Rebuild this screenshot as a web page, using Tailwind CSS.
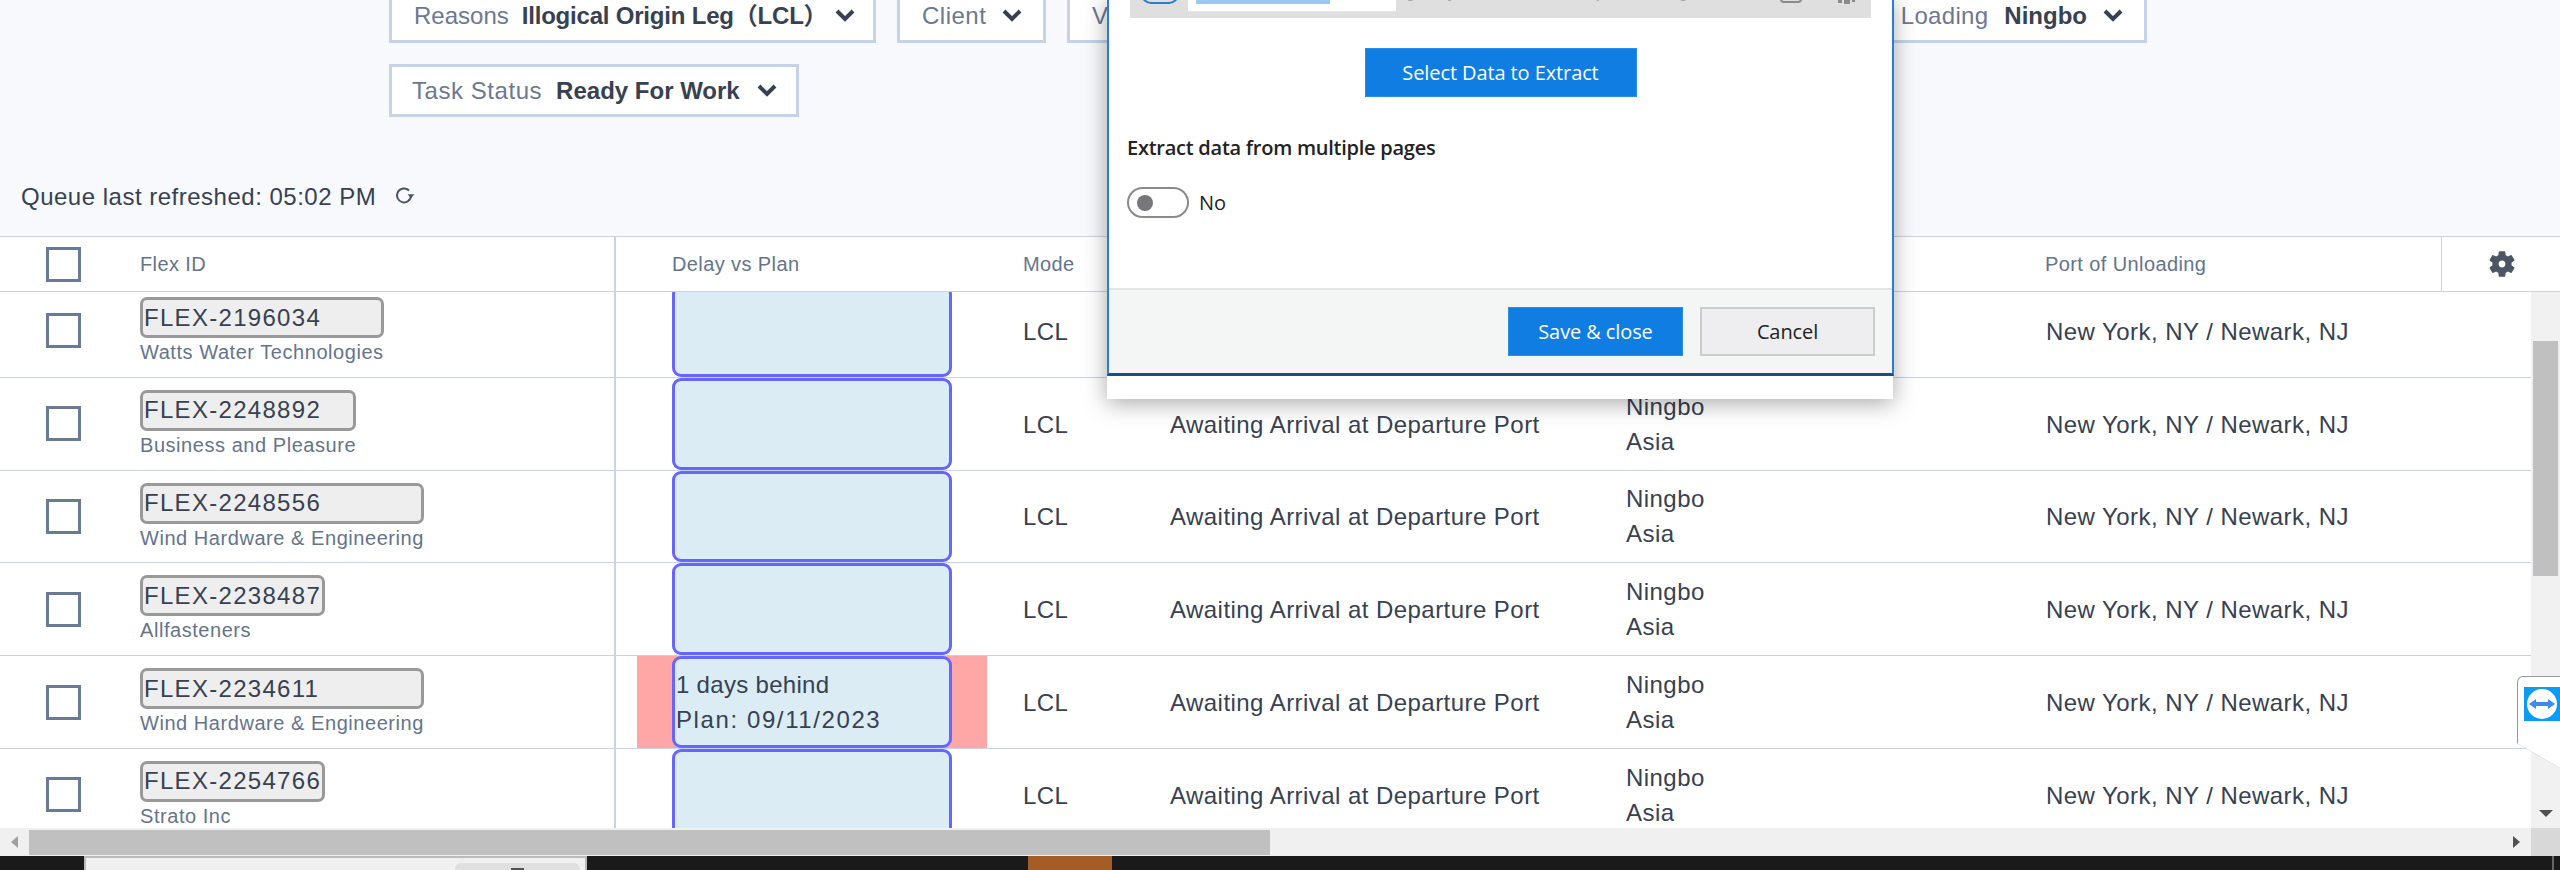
<!DOCTYPE html>
<html lang="en">
<head>
    <meta charset="UTF-8">
    <title>Queue</title>
    <script src="https://cdn.jsdelivr.net/npm/@tailwindcss/browser@4"></script>
</head>
<body class="m-0 bg-[#f7f9fd]">
<div class="relative w-[2560px] h-[870px] overflow-hidden flex flex-col font-['Liberation_Sans','Noto_Sans_CJK_SC',sans-serif] text-[#374151]">

    <!-- FILTERS -->
    <div class="h-[236px] shrink-0 pl-[389px] flex flex-col">
        <div class="flex gap-[21px] h-[54px] -mt-[11px] shrink-0">
            <button class="flex items-center w-[487px] pl-[22px] bg-white border-[3px] border-[#c5d2e8] text-[24px]">
                <span class="text-[#6b7890] mr-[13px]">Reasons</span>
                <b class="font-bold tracking-[-0.2px]">Illogical Origin Leg（LCL）</b>
                <svg class="ml-[8px]" width="20" height="14" viewBox="0 0 20 14" fill="none" stroke="#374151" stroke-width="4"><path d="M2 2l8 8 8-8"/></svg>
            </button>
            <button class="flex items-center w-[149px] pl-[22px] bg-white border-[3px] border-[#c5d2e8] text-[24px]">
                <span class="text-[#6b7890] tracking-[0.5px]">Client</span>
                <svg class="ml-[16px]" width="20" height="14" viewBox="0 0 20 14" fill="none" stroke="#374151" stroke-width="4"><path d="M2 2l8 8 8-8"/></svg>
            </button>
            <button class="flex items-center w-[180px] pl-[22px] bg-white border-[3px] border-[#c5d2e8] text-[24px]">
                <span class="text-[#6b7890]">Vendor</span>
            </button>
            <button class="flex items-center justify-end w-[659px] ml-[220px] pr-[21px] bg-white border-[3px] border-[#c5d2e8] text-[24px]">
                <span class="text-[#6b7890] mr-[16px] tracking-[0.3px]">Port of Loading</span>
                <b class="font-bold">Ningbo</b>
                <svg class="ml-[16px]" width="20" height="14" viewBox="0 0 20 14" fill="none" stroke="#374151" stroke-width="4"><path d="M2 2l8 8 8-8"/></svg>
            </button>
        </div>
        <div class="flex mt-[21px] shrink-0">
            <button class="flex items-center w-[410px] h-[53px] pl-[20px] bg-white border-[3px] border-[#c5d2e8] text-[24px]">
                <span class="text-[#6b7890] mr-[14px] tracking-[0.55px]">Task Status</span>
                <b class="font-bold">Ready For Work</b>
                <svg class="ml-[17px]" width="20" height="14" viewBox="0 0 20 14" fill="none" stroke="#374151" stroke-width="4"><path d="M2 2l8 8 8-8"/></svg>
            </button>
        </div>
        <div class="flex items-center -ml-[368px] mt-[62px] text-[24px] text-[#374151] tracking-[0.5px]">
            <span>Queue last refreshed: 05:02 PM</span>
            <svg class="ml-[18px] -mt-[2px]" width="22" height="22" viewBox="0 0 22 22" fill="none" stroke="#4b5563" stroke-width="2"><path d="M15 5.5a7 7 0 1 0 2 5"/><path d="M13.6 9.2h6.8l-3.4 4z" fill="#4b5563" stroke="none"/></svg>
        </div>
    </div>

    <!-- TABLE HEAD -->
    <div class="flex items-center h-[56px] shrink-0 bg-white border-y border-[#c8d3e8] text-[20px] text-[#64748b] tracking-[0.4px]">
        <div class="w-[140px] pl-[46px]"><span class="block w-[35px] h-[35px] border-[3px] border-[#6b7a94]"></span></div>
        <div class="w-[474px] h-full flex items-center">Flex ID</div>
        <div class="w-[2px] h-full bg-[#c8d3e8]"></div>
        <div class="w-[407px] pl-[56px]">Delay vs Plan</div>
        <div class="w-[147px]">Mode</div>
        <div class="w-[456px]">Status</div>
        <div class="w-[419px]">Port of Loading</div>
        <div class="w-[396px]">Port of Unloading</div>
        <div class="w-[119px] h-full flex items-center border-l border-[#c8d3e8] pl-[44px]">
            <svg width="32" height="32" viewBox="0 0 24 24" fill="#4b5563"><path d="M19.14 12.94c.04-.3.06-.61.06-.94 0-.32-.02-.64-.07-.94l2.03-1.58a.49.49 0 0 0 .12-.61l-1.92-3.32a.488.488 0 0 0-.59-.22l-2.39.96c-.5-.38-1.03-.7-1.62-.94l-.36-2.54a.484.484 0 0 0-.48-.41h-3.84c-.24 0-.43.17-.47.41l-.36 2.54c-.59.24-1.13.57-1.62.94l-2.39-.96c-.22-.08-.47 0-.59.22L2.74 8.87c-.12.21-.08.47.12.61l2.03 1.58c-.05.3-.09.63-.09.94s.02.64.07.94l-2.03 1.58a.49.49 0 0 0-.12.61l1.92 3.32c.12.22.37.29.59.22l2.39-.96c.5.38 1.03.7 1.62.94l.36 2.54c.05.24.24.41.48.41h3.84c.24 0 .44-.17.47-.41l.36-2.54c.59-.24 1.13-.56 1.62-.94l2.39.96c.22.08.47 0 .59-.22l1.92-3.32c.12-.22.07-.47-.12-.61l-2.01-1.58zM12 14.6c-1.43 0-2.6-1.17-2.6-2.6s1.17-2.6 2.6-2.6 2.6 1.17 2.6 2.6-1.17 2.6-2.6 2.6z"/></svg>
        </div>
    </div>

    <!-- TABLE BODY + SCROLLBARS -->
    <div class="flex h-[536px] shrink-0">
        <div class="w-[2531px] bg-white overflow-hidden">
            <div id="rows" class="-mt-[7px]"></div>
        </div>
        <div class="relative w-[29px] bg-[#f1f1f1]">
            <div class="absolute left-[2px] top-[49px] w-[25px] h-[235px] bg-[#c0c0c0]"></div>
            <div class="absolute left-[8px] top-[518px] w-0 h-0 border-x-[7px] border-x-transparent border-t-[7px] border-t-[#505050]"></div>
        </div>
    </div>
    <div class="flex h-[28px] shrink-0 bg-[#f0f0f0]">
        <div class="flex items-center w-[29px] pl-[11px]"><span class="w-0 h-0 border-y-[6px] border-y-transparent border-r-[7px] border-r-[#a0a0a0]"></span></div>
        <div class="w-[1241px] h-[25px] mt-[2px] bg-[#c0c0c0]"></div>
        <div class="flex items-center justify-end w-[1261px] pr-[11px]"><span class="w-0 h-0 border-y-[6px] border-y-transparent border-l-[7px] border-l-[#505050]"></span></div>
        <div class="w-[29px] bg-[#d8d8d8]"></div>
    </div>

    <!-- TASKBAR -->
    <div class="relative flex-1 bg-[#1a1a1a] overflow-hidden">
        <div class="absolute left-[84px] top-0 w-[503px] h-[14px] bg-[#f0f0f0] border-x-2 border-t-2 border-[#bbbbbb]">
            <div class="absolute left-[369px] top-[5px] w-[125px] h-[20px] rounded-[6px] bg-[#e0e0e0]"></div>
            <div class="absolute left-[425px] top-[10px] w-[13px] h-[4px] bg-[#555555]"></div>
        </div>
        <div class="absolute left-[1028px] top-0 w-[84px] h-[14px] bg-[#a65c26]"></div>
        <div class="absolute left-[2373px] top-[11px] text-[22px] leading-[26px] text-white font-semibold">5:14 PM</div>
        <div class="absolute left-[2552px] top-0 w-[2px] h-[14px] bg-[#666666]"></div>
    </div>

    <!-- TEAMVIEWER TAB -->
    <div class="absolute left-[2517px] top-[676px] w-[43px] h-[92px] bg-[#8f9aa8] rounded-tl-[6px] [clip-path:polygon(0_0,100%_0,100%_100%,0_73%)]">
        <div class="relative ml-[1px] mt-[1px] h-full bg-white rounded-tl-[5px] [clip-path:polygon(0_0,100%_0,100%_100%,0_73%)]">
            <svg class="absolute left-[6px] top-[10px]" width="36" height="34" viewBox="0 0 36 34">
                <rect width="36" height="34" fill="#0a9cf5"/>
                <circle cx="18" cy="17" r="15" fill="#ffffff"/>
                <path d="M5 17l7-5v3h12v-3l7 5-7 5v-3H12v3z" fill="#3b8cf0"/>
            </svg>
        </div>
    </div>

    <!-- EXTRACT DIALOG -->
    <div class="absolute left-[1107px] -top-[2px] w-[786px] h-[401px] bg-white shadow-[0_4px_22px_rgba(0,0,0,0.35)]">
        <div class="flex flex-col w-[787px] h-[378px] border-x-2 border-b-[3px] border-[#2b7cd3] border-b-[#1c4f86]">
            <div class="relative mt-[2px] mx-[21px] h-[18px] shrink-0 bg-[#dfdfdf] overflow-hidden text-[#a8a8a8] text-[20px]">
                <div class="absolute left-[11px] -top-[30px] w-[38px] h-[34px] rounded-[10px] border-2 border-[#2b7cd3]"></div>
                <div class="absolute left-[58px] -top-[2px] w-[208px] h-[14px] bg-white border-b border-[#e6e6e6]">
                    <div class="ml-[8px] w-[134px] h-[6px] bg-[#99c9f1]"></div>
                </div>
                <span class="absolute left-[277px] -top-[24px] leading-[28px] tracking-[1.5px]">[ Any text here, separated ]</span>
                <div class="absolute left-[650px] -top-[20px] w-[22px] h-[23px] rounded-[4px] border-2 border-[#8a8a8a]"></div>
                <div class="absolute left-[708px] top-0 w-[4px] h-[3px] bg-[#8a8a8a]"></div>
                <div class="absolute left-[714px] top-0 w-[6px] h-[4px] bg-[#8a8a8a]"></div>
                <div class="absolute left-[722px] top-0 w-[3px] h-[2px] bg-[#8a8a8a]"></div>
            </div>
            <div class="flex justify-center mt-[30px] shrink-0">
                <button class="w-[272px] h-[49px] bg-[#0f7de2] border border-[#2b8fe8] text-white text-[20px] font-['Open_Sans',sans-serif] tracking-[-0.1px]">Select Data to Extract</button>
            </div>
            <div class="mt-[38px] ml-[18px] text-[20px] leading-[26px] font-semibold text-[#222222] font-['Open_Sans',sans-serif] tracking-[-0.25px]">Extract data from multiple pages</div>
            <div class="flex items-center mt-[26px] ml-[18px] h-[31px] font-['Open_Sans',sans-serif] text-[20px] text-[#222222]">
                <span class="flex items-center w-[62px] h-[31px] rounded-full border-2 border-[#8a8a8a] pl-[8px]"><span class="block w-[16px] h-[16px] rounded-full bg-[#76767b]"></span></span>
                <span class="ml-[10px]">No</span>
            </div>
            <div class="flex gap-[17px] justify-end items-start mt-auto h-[85px] pt-[17px] pr-[17px] bg-[#f4f6f6] border-t-2 border-[#e4e4e4] font-['Open_Sans',sans-serif] text-[20px]">
                <button class="w-[175px] h-[49px] bg-[#0f7de2] border border-[#2b8fe8] text-white tracking-[-0.1px]">Save &amp; close</button>
                <button class="w-[175px] h-[49px] bg-[#eeeef0] border-2 border-[#cccccc] text-[#222222] tracking-[-0.1px]">Cancel</button>
            </div>
        </div>
    </div>
</div>

<script>
    // rows of the queue, the first one is scrolled partly out of view
    const rows = [
        { id: "FLEX-2196034", client: "Watts Water Technologies", port: false },
        { id: "FLEX-2248892", client: "Business and Pleasure", port: true },
        { id: "FLEX-2248556", client: "Wind Hardware & Engineering", port: true },
        { id: "FLEX-2238487", client: "Allfasteners", port: true },
        { id: "FLEX-2234611", client: "Wind Hardware & Engineering", port: true, late: true },
        { id: "FLEX-2254766", client: "Strato Inc", port: true }
    ];

    document.getElementById("rows").innerHTML = rows.map(r => `
        <div class="flex h-[92.8px] border-b border-[#c8d3e8] text-[24px] tracking-[0.45px]">
            <div class="w-[140px] pl-[46px] flex items-center"><span class="block w-[35px] h-[35px] border-[3px] border-[#6b7a94]"></span></div>
            <div class="w-[474px] pt-[12px]">
                <div class="inline-flex flex-col">
                    <span class="h-[41px] pl-[1px] pr-[1px] flex items-center min-w-[130px] bg-[#eeeeee] border-[3px] border-[#999999] rounded-[7px] tracking-[1.3px] text-[#374151]">${r.id}</span>
                    <span class="mt-[0px] text-[20px] leading-[28px] tracking-[0.55px] text-[#64748b] whitespace-nowrap">${r.client}</span>
                </div>
            </div>
            <div class="w-[2px] bg-[#c8d3e8]"></div>
            <div class="w-[407px] pl-[21px]">
                <div class="w-[350px] h-full flex justify-center ${r.late ? "bg-[#ffa6a6]" : ""}">
                    <div class="w-[280px] h-full flex flex-col justify-center gap-[8px] bg-[#dbecf4] border-[3px] border-[#6666ff] rounded-[9px] pl-[1px] leading-[27px] text-[#374151]">
                        ${r.late ? '<span class="tracking-[0.3px]">1 days behind</span><span class="tracking-[1.6px]">Plan: 09/11/2023</span>' : ""}
                    </div>
                </div>
            </div>
            <div class="w-[147px] pt-[2px] flex items-center">LCL</div>
            <div class="w-[456px] pt-[2px] flex items-center">${r.port ? "Awaiting Arrival at Departure Port" : ""}</div>
            <div class="w-[420px] flex flex-col justify-center gap-[8px] leading-[27px]">${r.port ? "<span>Ningbo</span><span>Asia</span>" : ""}</div>
            <div class="pt-[2px] flex items-center">New York, NY / Newark, NJ</div>
        </div>
    `).join("");
</script>
</body>
</html>
